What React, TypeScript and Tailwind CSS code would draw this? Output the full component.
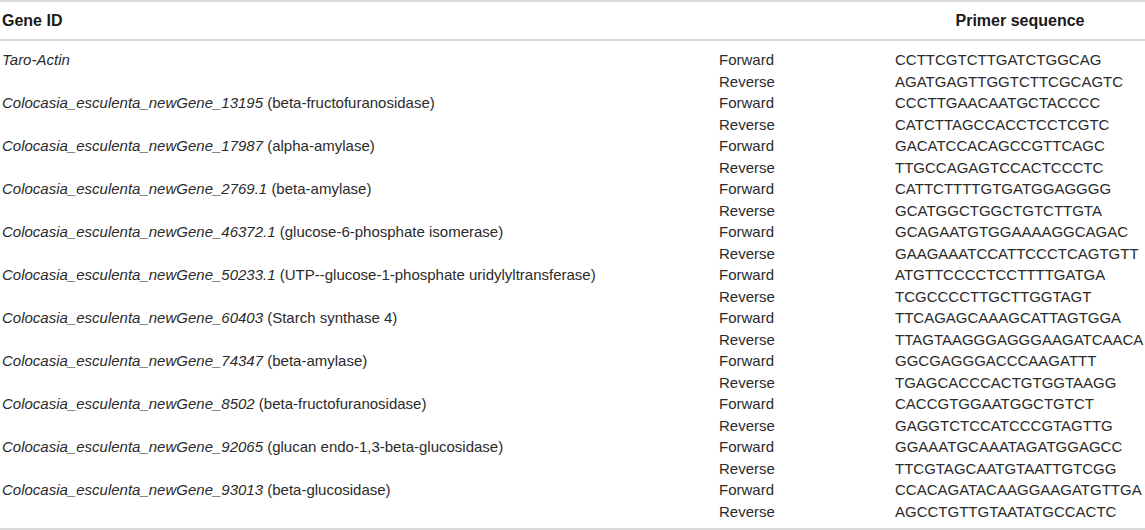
const genes: { id: string; note?: string; fwd: string; rev: string }[] = [
  { id: "Taro-Actin", fwd: "CCTTCGTCTTGATCTGGCAG", rev: "AGATGAGTTGGTCTTCGCAGTC" },
  { id: "Colocasia_esculenta_newGene_13195", note: "(beta-fructofuranosidase)", fwd: "CCCTTGAACAATGCTACCCC", rev: "CATCTTAGCCACCTCCTCGTC" },
  { id: "Colocasia_esculenta_newGene_17987", note: "(alpha-amylase)", fwd: "GACATCCACAGCCGTTCAGC", rev: "TTGCCAGAGTCCACTCCCTC" },
  { id: "Colocasia_esculenta_newGene_2769.1", note: "(beta-amylase)", fwd: "CATTCTTTTGTGATGGAGGGG", rev: "GCATGGCTGGCTGTCTTGTA" },
  { id: "Colocasia_esculenta_newGene_46372.1", note: "(glucose-6-phosphate isomerase)", fwd: "GCAGAATGTGGAAAAGGCAGAC", rev: "GAAGAAATCCATTCCCTCAGTGTT" },
  { id: "Colocasia_esculenta_newGene_50233.1", note: "(UTP--glucose-1-phosphate uridylyltransferase)", fwd: "ATGTTCCCCTCCTTTTGATGA", rev: "TCGCCCCTTGCTTGGTAGT" },
  { id: "Colocasia_esculenta_newGene_60403", note: "(Starch synthase 4)", fwd: "TTCAGAGCAAAGCATTAGTGGA", rev: "TTAGTAAGGGAGGGAAGATCAACA" },
  { id: "Colocasia_esculenta_newGene_74347", note: "(beta-amylase)", fwd: "GGCGAGGGACCCAAGATTT", rev: "TGAGCACCCACTGTGGTAAGG" },
  { id: "Colocasia_esculenta_newGene_8502", note: "(beta-fructofuranosidase)", fwd: "CACCGTGGAATGGCTGTCT", rev: "GAGGTCTCCATCCCGTAGTTG" },
  { id: "Colocasia_esculenta_newGene_92065", note: "(glucan endo-1,3-beta-glucosidase)", fwd: "GGAAATGCAAATAGATGGAGCC", rev: "TTCGTAGCAATGTAATTGTCGG" },
  { id: "Colocasia_esculenta_newGene_93013", note: "(beta-glucosidase)", fwd: "CCACAGATACAAGGAAGATGTTGA", rev: "AGCCTGTTGTAATATGCCACTC" },
];

export default function App() {
  return (
    <div className="h-[530px] w-[1145px] overflow-hidden bg-white font-['Liberation_Sans',Arial,sans-serif] text-[15px] text-[#2b2b2b]">
      <div className="grid h-[41px] grid-cols-[719px_176px_250px] items-center border-y-2 border-[#dadada] text-[16px] font-bold text-[#1a1a1a]">
        <div className="pl-[2px]">Gene ID</div>
        <div />
        <div className="text-center">Primer sequence</div>
      </div>

      <div className="grid grid-cols-[719px_176px_250px] border-b-2 border-[#dadada] pb-[6px] pt-[8px] leading-[21.5px]">
        {genes.map((g) => (
          <div key={g.id} className="contents">
            <div className="pl-[2px] whitespace-nowrap">
              <i>{g.id}</i>
              {g.note ? <span> {g.note}</span> : null}
            </div>
            <div>Forward</div>
            <div className="whitespace-nowrap">{g.fwd}</div>
            <div />
            <div>Reverse</div>
            <div className="whitespace-nowrap">{g.rev}</div>
          </div>
        ))}
      </div>
    </div>
  );
}
